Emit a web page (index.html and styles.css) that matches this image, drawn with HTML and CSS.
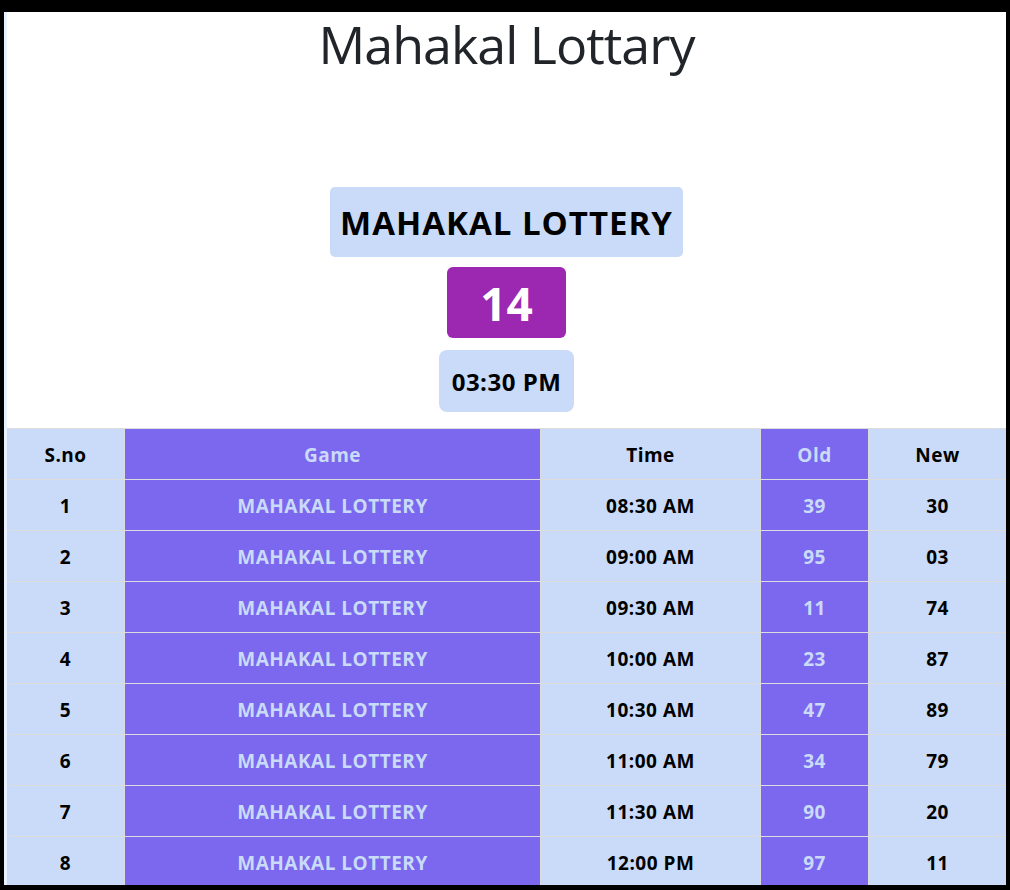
FILE: index.html
```html
<!DOCTYPE html>
<html>
<head>
<meta charset="utf-8">
<link rel="stylesheet" href="styles.css">
</head>
<body>
<div class="frame">
  <div class="page">
    <h1 class="title">Mahakal Lottary</h1>
    <div class="result">
      <div class="name-box">MAHAKAL LOTTERY</div>
      <div class="num-box">14</div>
      <div class="time-box">03:30 PM</div>
    </div>
    <div class="table-wrap">
    <table class="results">
      <thead>
        <tr><th class="c-sno">S.no</th><th class="purple c-game">Game</th><th class="c-time">Time</th><th class="purple c-old">Old</th><th class="c-new">New</th></tr>
      </thead>
      <tbody>
        <tr><td>1</td><td class="purple">MAHAKAL LOTTERY</td><td>08:30 AM</td><td class="purple">39</td><td>30</td></tr>
        <tr><td>2</td><td class="purple">MAHAKAL LOTTERY</td><td>09:00 AM</td><td class="purple">95</td><td>03</td></tr>
        <tr><td>3</td><td class="purple">MAHAKAL LOTTERY</td><td>09:30 AM</td><td class="purple">11</td><td>74</td></tr>
        <tr><td>4</td><td class="purple">MAHAKAL LOTTERY</td><td>10:00 AM</td><td class="purple">23</td><td>87</td></tr>
        <tr><td>5</td><td class="purple">MAHAKAL LOTTERY</td><td>10:30 AM</td><td class="purple">47</td><td>89</td></tr>
        <tr><td>6</td><td class="purple">MAHAKAL LOTTERY</td><td>11:00 AM</td><td class="purple">34</td><td>79</td></tr>
        <tr><td>7</td><td class="purple">MAHAKAL LOTTERY</td><td>11:30 AM</td><td class="purple">90</td><td>20</td></tr>
        <tr><td>8</td><td class="purple">MAHAKAL LOTTERY</td><td>12:00 PM</td><td class="purple">97</td><td>11</td></tr>
      </tbody>
    </table>
    </div>
  </div>
</div>
</body>
</html>
```

FILE: styles.css
```css
html, body {
  margin: 0;
  padding: 0;
  background: #000;
  height: 890px;
  overflow: hidden;
}
.frame {
  padding: 12px 4px 0 4px;
}
.page {
  display: flex;
  flex-direction: column;
  background: #fff;
  border-left: 3px solid #e6f2ff;
  font-family: "Open Sans", "Noto Sans", sans-serif;
  color: #000;
  height: 873px;
}
.title {
  margin: 0;
  text-align: center;
  font-weight: 400;
  font-size: 52px;
  line-height: 64px;
  color: #212529;
  letter-spacing: -1px;
}
.result {
  display: flex;
  flex-direction: column;
  align-items: center;
  padding-top: 111px;
  padding-bottom: 16px;
}
.name-box {
  background: #c9dbf8;
  border-radius: 5px;
  height: 70px;
  line-height: 72px;
  padding: 0 10px;
  font-size: 33px;
  font-weight: 700;
  letter-spacing: 1px;
}
.num-box {
  margin-top: 10px;
  background: #9c27b0;
  color: #fff;
  border-radius: 6px;
  width: 119px;
  height: 71px;
  line-height: 73px;
  text-align: center;
  font-size: 46px;
  font-weight: 700;
}
.time-box {
  margin-top: 12px;
  background: #c9dbf8;
  border-radius: 8px;
  width: 135px;
  height: 62px;
  line-height: 64px;
  text-align: center;
  font-size: 24px;
  font-weight: 700;
  letter-spacing: 0.5px;
}
.table-wrap {
  flex: 1;
  min-height: 0;
  overflow: hidden;
}
.results {
  width: 100%;
  border-collapse: collapse;
  border-top: 1px solid #dcdcdc;
}
.results th,
.results td {
  background: #c9dbf8;
  border: 1px solid #dcdcdc;
  border-top: 0;
  height: 49px;
  padding: 1px 0 0 0;
  line-height: 26px;
  text-align: center;
  font-size: 19px;
  font-weight: 700;
  letter-spacing: 0.5px;
  color: #000;
}
.results tr > :first-child { border-left: 0; }
.results tr > :last-child { border-right: 0; }
.results .purple {
  background: #7b68ee;
  color: #c9dbf8;
}
.c-sno { width: 117px; }
.c-game { width: 415px; }
.c-time { width: 219px; }
.c-old { width: 107px; }
```
